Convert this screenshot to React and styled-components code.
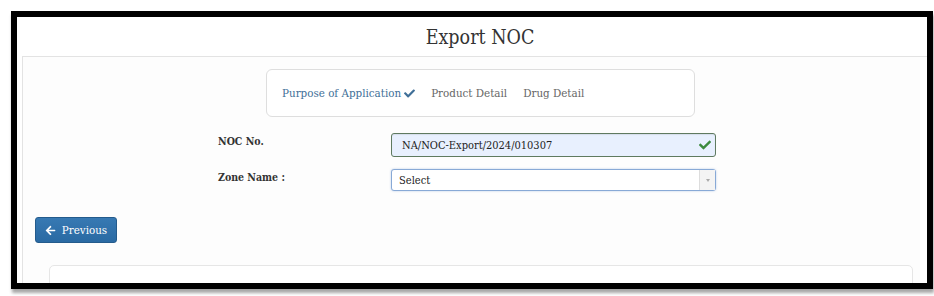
import React from "react";
import styled, { createGlobalStyle } from "styled-components";

const GlobalStyle = createGlobalStyle`
  html, body {
    margin: 0;
    padding: 0;
    background: #ffffff;
  }
  body {
    font-family: "DejaVu Serif", "Liberation Serif", serif;
    font-stretch: condensed;
  }
`;

const Page = styled.div`
  width: 934px;
  height: 296px;
  padding: 11px 0 0 11px;
  box-sizing: border-box;
`;

const Frame = styled.div`
  width: 922px;
  height: 278px;
  box-sizing: border-box;
  border: 6px solid #000;
  background: #fff;
  overflow: hidden;
  box-shadow: 1px 4px 3px rgba(0, 0, 0, 0.35);
`;

const Title = styled.h1`
  margin: 0;
  height: 39px;
  padding: 2px 0 0 16px;
  box-sizing: border-box;
  display: flex;
  align-items: center;
  justify-content: center;
  font-size: 19.5px;
  font-weight: normal;
  color: #333;
`;

const Panel = styled.div`
  margin-left: 5px;
  width: 916px;
  height: 240px;
  border: 1px solid #e3e3e3;
  border-right: none;
  background: #fdfdfd;
  box-sizing: border-box;
  padding-top: 12px;
`;

const Steps = styled.div`
  margin: 0 auto;
  width: 429px;
  height: 48px;
  box-sizing: border-box;
  border: 1px solid #dedede;
  border-radius: 6px;
  background: #fff;
  display: flex;
  align-items: center;
  padding-left: 15px;
  gap: 16px;
  font-size: 11.5px;
`;

const Step = styled.span`
  color: ${(p) => (p.$done ? "#3f6f98" : "#666")};
  display: inline-flex;
  align-items: center;
  gap: 3px;
`;

const Form = styled.div`
  margin-top: 16px;
  display: flex;
  flex-direction: column;
  gap: 12px;
`;

const Row = styled.div`
  display: flex;
  align-items: flex-start;
  padding-left: 195px;
`;

const Label = styled.label`
  width: 173px;
  font-size: 10.5px;
  font-weight: bold;
  color: #333;
  padding-top: ${(p) => p.$top || 3}px;
`;

const Field = styled.div`
  position: relative;
  width: 325px;
  height: ${(p) => p.$h}px;
  box-sizing: border-box;
  border: 1px solid ${(p) => (p.$valid ? "#5f7a60" : "#88a9d6")};
  border-radius: 3px;
  background: ${(p) => (p.$valid ? "#e8f0fe" : "#fff")};
  display: flex;
  align-items: center;
  padding-left: ${(p) => (p.$valid ? 10 : 7)}px;
  font-size: 11px;
  color: #222;
  box-shadow: ${(p) =>
    p.$valid ? "inset 0 1px 1px rgba(0,0,0,0.08)" : "0 0 2px rgba(102,145,210,0.5)"};
`;

const Tick = styled.span`
  position: absolute;
  right: 4px;
  top: 50%;
  transform: translateY(-50%);
  display: flex;
`;

const Arrow = styled.span`
  position: absolute;
  right: 0;
  top: 0;
  bottom: 0;
  width: 15px;
  border-left: 1px solid #ddd;
  background: #f4f4f4;
  display: flex;
  align-items: center;
  justify-content: center;

  &::after {
    content: "";
    border-left: 2px solid transparent;
    border-right: 2px solid transparent;
    border-top: 3px solid #aaa;
  }
`;

const Button = styled.button`
  margin: 26px 0 0 12px;
  width: 82px;
  height: 26px;
  border: 1px solid #245b8c;
  border-radius: 3px;
  background: linear-gradient(#3779b3, #2a6aa3);
  color: #fff;
  font-family: inherit;
  font-stretch: condensed;
  font-size: 11.5px;
  display: flex;
  align-items: center;
  justify-content: center;
  gap: 6px;
  padding: 0;
`;

const SubPanel = styled.div`
  margin: 22px 0 0 26px;
  width: 862px;
  height: 40px;
  border: 1px solid #e6e6e6;
  border-radius: 5px;
  background: #fff;
`;

const Check = ({ color, size = 11 }) => (
  <svg width={size} height={size} viewBox="0 0 512 512">
    <path
      fill={color}
      d="M173.9 439.4l-166.4-166.4c-10-10-10-26.2 0-36.2l36.2-36.2c10-10 26.2-10 36.2 0L192 312.7 432.1 72.6c10-10 26.2-10 36.2 0l36.2 36.2c10 10 10 26.2 0 36.2L210.1 439.4c-10 10-26.2 10-36.2 0z"
    />
  </svg>
);

const ArrowLeft = () => (
  <svg width="11" height="11" viewBox="0 0 448 512">
    <path
      fill="#fff"
      d="M257.5 445.1l-22.2 22.2c-9.4 9.4-24.6 9.4-33.9 0L7 273c-9.4-9.4-9.4-24.6 0-33.9L201.4 44.7c9.4-9.4 24.6-9.4 33.9 0l22.2 22.2c9.5 9.5 9.300 25-.4 34.3L136.6 216H424c13.3 0 24 10.7 24 24v32c0 13.3-10.7 24-24 24H136.6l120.5 114.8c9.8 9.3 10 24.8.4 34.3z"
    />
  </svg>
);

export default function App() {
  return (
    <>
      <GlobalStyle />
      <Page>
        <Frame>
          <Title>Export NOC</Title>
          <Panel>
            <Steps>
              <Step $done>
                Purpose of Application <Check color="#3f6f98" />
              </Step>
              <Step>Product Detail</Step>
              <Step>Drug Detail</Step>
            </Steps>
            <Form>
              <Row>
                <Label $top={2}>NOC No.</Label>
                <Field $valid $h={24}>
                  NA/NOC-Export/2024/010307
                  <Tick>
                    <Check color="#3c8a3e" size={12} />
                  </Tick>
                </Field>
              </Row>
              <Row>
                <Label $top={2}>Zone Name :</Label>
                <Field $h={22}>
                  Select
                  <Arrow />
                </Field>
              </Row>
            </Form>
            <Button>
              <ArrowLeft />
              Previous
            </Button>
            <SubPanel />
          </Panel>
        </Frame>
      </Page>
    </>
  );
}
